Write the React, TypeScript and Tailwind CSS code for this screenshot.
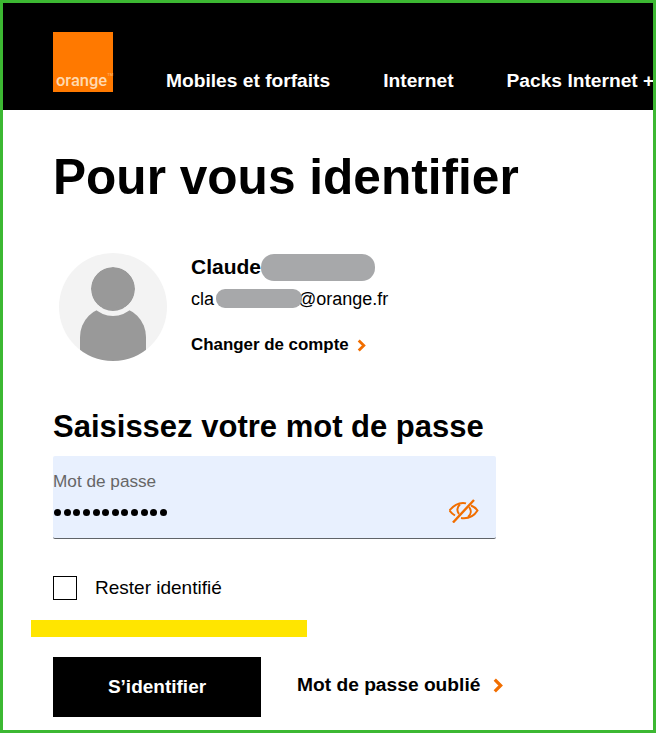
const Chevron = ({ className }: { className: string }) => (
  <svg className={className} viewBox="0 0 9 14" fill="none" stroke="#f16e00" strokeWidth={3}>
    <path d="M1.500 1.500 7 7l-5.500 5.500" />
  </svg>
);

export default function App() {
  return (
    <div className="h-[733px] w-[656px] overflow-hidden border-[3px] border-[#3cb832] bg-white font-['Liberation_Sans',Arial,sans-serif] text-black">
      {/* Header */}
      <header className="flex h-[107px] overflow-hidden bg-black pl-[50px] pt-[29px]">
        <div className="flex h-[60px] w-[60px] shrink-0 items-start bg-[#ff7900] pl-[3px] pt-[39px]">
          <span className="font-['Roboto',sans-serif] text-[16.500px] font-medium leading-[20px] text-[#ffd9b0]">orange</span>
          <span className="text-[4px] leading-[8px] text-[#ffbf80]">TM</span>
        </div>
        <nav className="ml-[53px] flex gap-[53px] whitespace-nowrap pt-[38px] text-[19.200px] font-bold leading-[22px] text-white">
          <span>Mobiles et forfaits</span>
          <span>Internet</span>
          <span>Packs Internet +</span>
        </nav>
      </header>

      <main className="pl-[50px]">
        <h1 className="mt-[34px] text-[49.600px] font-bold leading-[66px]">Pour vous identifier</h1>

        {/* Account */}
        <section className="mt-[43px] flex">
          <div className="relative ml-[6px] h-[108px] w-[108px] shrink-0 overflow-hidden rounded-full bg-[#f3f3f3]">
            <div className="absolute left-[32px] top-[14px] h-[44px] w-[44px] rounded-full bg-[#999999]" />
            <div className="absolute left-[21px] top-[54px] h-[54px] w-[66px] rounded-t-[30px] bg-[#999999]" />
            <div className="absolute left-[27px] top-[9px] h-[54px] w-[54px] rounded-full border-[5px] border-[#f3f3f3]" />
          </div>
          <div className="ml-[24px]">
            <div className="flex h-[28px] items-center">
              <span className="text-[21px] font-bold leading-[26px]">Claude</span>
              <span className="h-[27px] w-[114px] rounded-[13px] bg-[#a7a8aa]" />
            </div>
            <div className="relative mt-[7px] text-[18px] leading-[22px]">
              cla<span className="inline-block w-[84px]" />@orange.fr
              <span className="absolute left-[25px] top-[1px] h-[19px] w-[86px] rounded-[9px] bg-[#a7a8aa]" />
            </div>
            <a className="mt-[25px] flex items-center text-[16.900px] font-bold leading-[20px]">
              Changer de compte
              <Chevron className="ml-[8px] h-[13px] w-[9px]" />
            </a>
          </div>
        </section>

        {/* Password */}
        <h2 className="mt-[46px] text-[31px] font-bold leading-[40px]">Saisissez votre mot de passe</h2>
        <div className="mt-[9px] h-[83px] w-[443px] rounded-[2px] border-b border-[#5f6368] bg-[#e8f0fe] pt-[15px]">
          <div className="text-[17.200px] leading-[20px] text-[#666666]">Mot de passe</div>
          <div className="flex items-center justify-between pr-[17px] pt-[8px]">
            <span className="ml-[1px] flex gap-[2.640px] pt-[2px]">
              {Array.from({ length: 12 }).map((_, i) => (
                <span key={i} className="h-[7px] w-[7px] rounded-full bg-black" />
              ))}
            </span>
            <svg className="h-[24px] w-[30px]" viewBox="0 0 30 24" fill="none" stroke="#f16e00" strokeWidth={2}>
              <path d="M.5 11.500C4 7 9 4 14 4c1 0 2 .1 3 .4M6 16.500C4 15.300 2 13.500.5 11.500M12 19c1 .2 2 .3 3 .3 5.500 0 10.500-3 13.500-7.800-1.500-2-3.800-4-6.500-5" />
              <path d="M11 5.500c-3 2.500-3.500 6.500-1 9.500M19 18c3-2.500 3.800-6.500 1-10" />
              <path d="M4 23.500 25 1" strokeWidth={2.400} />
            </svg>
          </div>
        </div>

        {/* Remember me */}
        <label className="mt-[37px] flex items-center">
          <span className="h-[24px] w-[24px] border border-black bg-white" />
          <span className="ml-[18px] text-[19px] leading-[24px]">Rester identifié</span>
        </label>

        <div className="-ml-[22px] mt-[20px] h-[17px] w-[276px] bg-[#ffe500]" />

        {/* Actions */}
        <div className="mt-[20px] flex items-center">
          <button className="h-[60px] w-[208px] bg-black text-[19px] font-bold text-white">S’identifier</button>
          <a className="ml-[36px] flex items-center pb-[4px] text-[19.200px] font-bold leading-[22px]">
            Mot de passe oublié
            <Chevron className="ml-[13px] h-[15px] w-[10px]" />
          </a>
        </div>
      </main>
    </div>
  );
}
